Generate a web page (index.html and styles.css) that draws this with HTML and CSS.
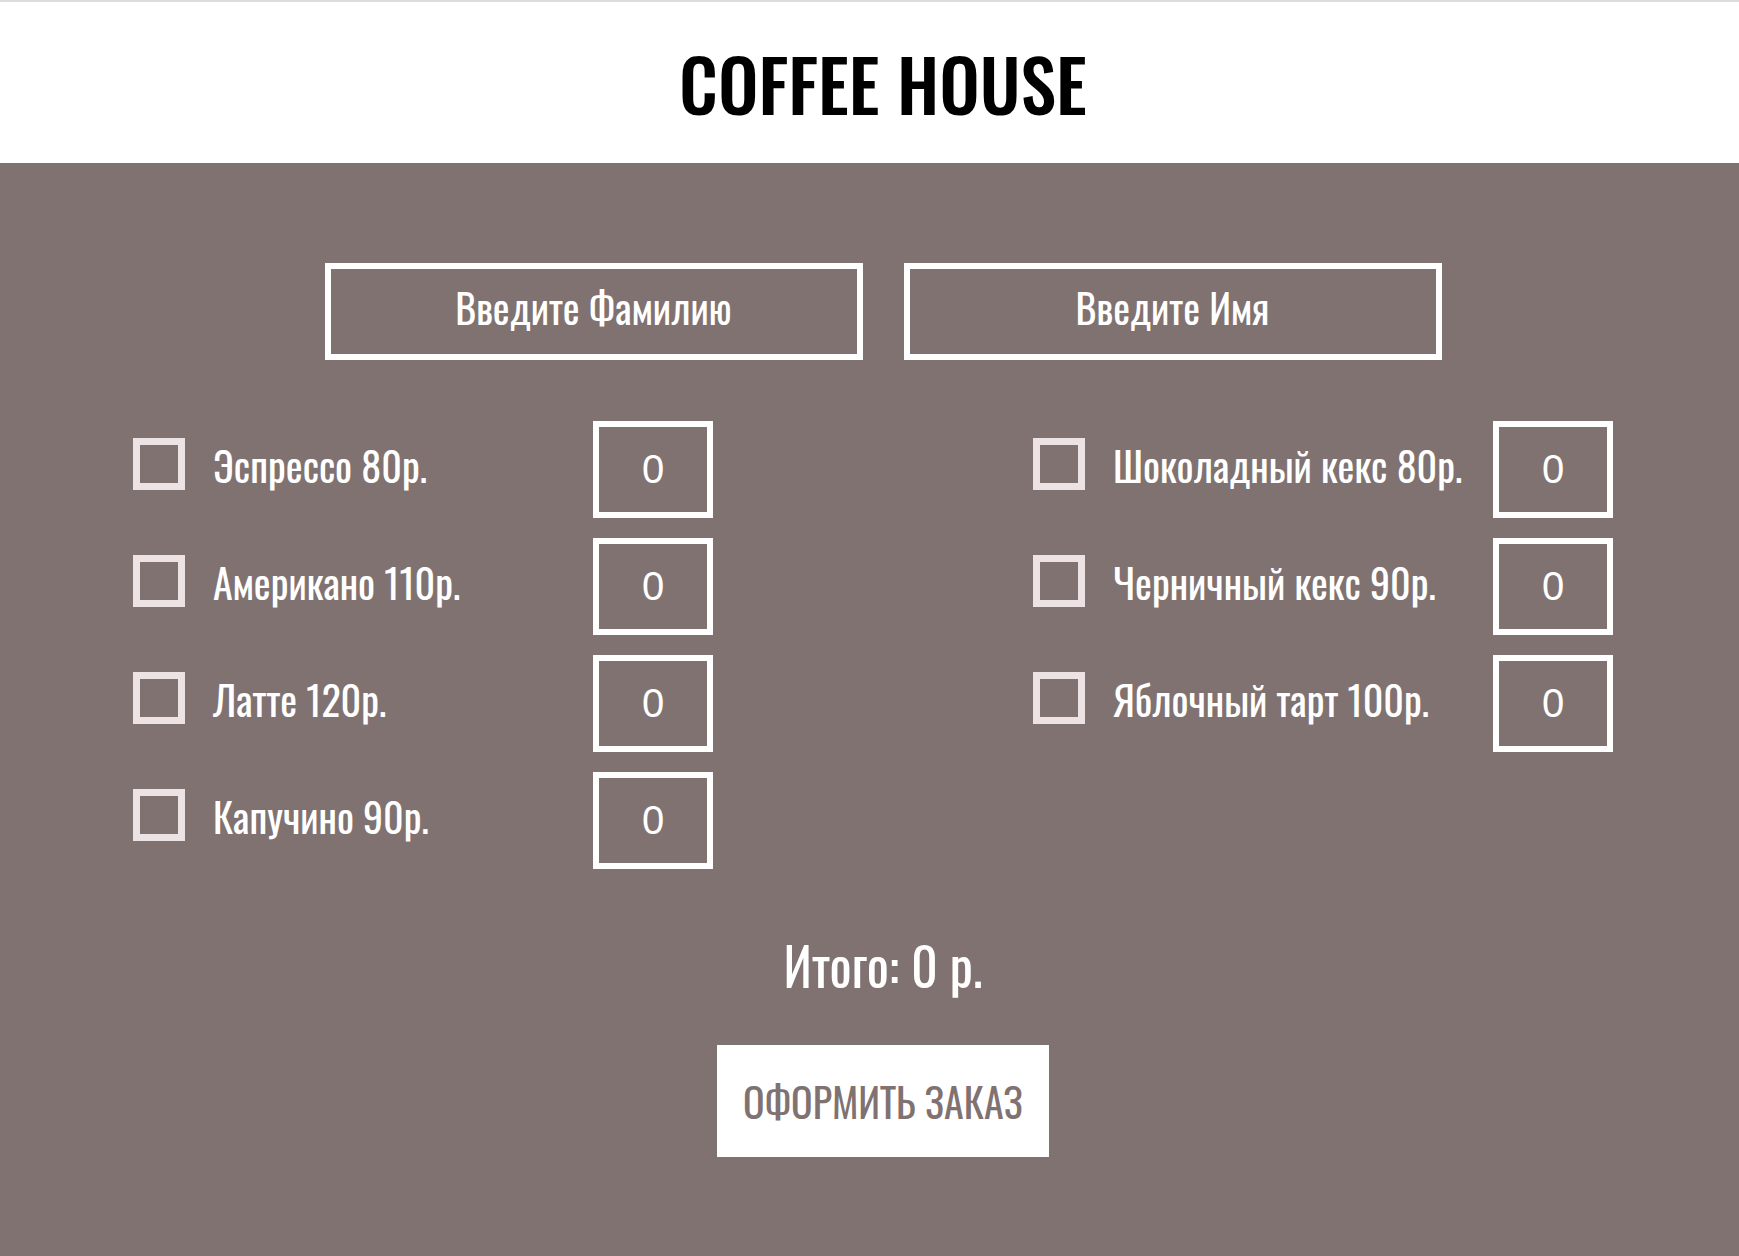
FILE: index.html
```html
<!DOCTYPE html>
<html lang="ru">
<head>
    <meta charset="UTF-8">
    <meta name="viewport" content="width=device-width, initial-scale=1.0">
    <title>Coffee House</title>
<link rel="stylesheet" href="styles.css">
</head>
<body>
    <header class="top">
        <h1 class="brand">COFFEE HOUSE</h1>
    </header>

    <main class="order">
        <div class="names">
            <input class="name-field" type="text" placeholder="Введите Фамилию">
            <input class="name-field" type="text" placeholder="Введите Имя">
        </div>

        <div class="menu">
            <div class="menu-col">
                <label class="item">
                    <input class="check" type="checkbox" data-price="80">
                    <span class="item-name">Эспрессо 80р.</span>
                    <input class="qty" type="text" value="0">
                </label>
                <label class="item">
                    <input class="check" type="checkbox" data-price="110">
                    <span class="item-name">Американо 110р.</span>
                    <input class="qty" type="text" value="0">
                </label>
                <label class="item">
                    <input class="check" type="checkbox" data-price="120">
                    <span class="item-name">Латте 120р.</span>
                    <input class="qty" type="text" value="0">
                </label>
                <label class="item">
                    <input class="check" type="checkbox" data-price="90">
                    <span class="item-name">Капучино 90р.</span>
                    <input class="qty" type="text" value="0">
                </label>
            </div>
            <div class="menu-col">
                <label class="item">
                    <input class="check" type="checkbox" data-price="80">
                    <span class="item-name">Шоколадный кекс 80р.</span>
                    <input class="qty" type="text" value="0">
                </label>
                <label class="item">
                    <input class="check" type="checkbox" data-price="90">
                    <span class="item-name">Черничный кекс 90р.</span>
                    <input class="qty" type="text" value="0">
                </label>
                <label class="item">
                    <input class="check" type="checkbox" data-price="100">
                    <span class="item-name">Яблочный тарт 100р.</span>
                    <input class="qty" type="text" value="0">
                </label>
            </div>
        </div>

        <p class="total">Итого: <span id="sum">0</span> р.</p>
        <div class="actions">
            <button class="submit" type="button">ОФОРМИТЬ ЗАКАЗ</button>
        </div>
    </main>

<script>
    let items = document.querySelectorAll(".item"),
    sum = document.getElementById("sum");

    function count() {
        let total = 0;
        items.forEach(item => {
            let check = item.querySelector(".check"),
            qty = parseInt(item.querySelector(".qty").value) || 0;
            if (check.checked) total += qty * check.dataset.price;
        });
        sum.textContent = total;
    }
    items.forEach(item => item.addEventListener("input", count));
</script>
</body>
</html>
```

FILE: styles.css
```css
body{
    margin: 0;
    font-family: "Oswald", "Roboto Condensed", sans-serif;
    background-color: #807271;
}
.top{
    height: 161px;
    border-top: 2px solid #dcdcdc;
    background-color: white;
    display: flex;
    align-items: center;
    justify-content: center;
    padding-left: 27px;
}
.brand{
    margin: 0;
    font-size: 72px;
    font-weight: 500;
    color: black;
}
.order{
    padding: 100px 0 99px;
    color: white;
}
.names{
    display: flex;
    justify-content: center;
    gap: 41px;
    padding-left: 27px;
}
.name-field{
    box-sizing: border-box;
    width: 538px;
    height: 97px;
    padding: 0 0 10px;
    border: 6px solid white;
    background: transparent;
    text-align: center;
    font-family: inherit;
    font-size: 40px;
    color: white;
    outline: none;
    &::placeholder{
        color: white;
    }
}
.menu{
    display: grid;
    grid-template-columns: 580px 580px;
    column-gap: 320px;
    margin: 61px 0 0 133px;
}
.menu-col{
    display: flex;
    flex-direction: column;
    gap: 20px;
}
.item{
    display: flex;
    align-items: center;
    height: 97px;
    font-size: 40px;
    white-space: nowrap;
}
.check{
    appearance: none;
    box-sizing: border-box;
    width: 52px;
    height: 52px;
    margin: 0 28px 0 0;
    border: 7px solid #ede3e4;
    background: transparent;
    cursor: pointer;
    position: relative;
    top: -6px;
}
.check:checked{
    background-color: #ede3e4;
}
.item-name{
    flex: 1;
    padding-bottom: 9px;
}
.qty{
    box-sizing: border-box;
    width: 120px;
    height: 97px;
    border: 6px solid white;
    background: transparent;
    text-align: center;
    font-family: "Liberation Sans", sans-serif;
    font-size: 40px;
    color: white;
    outline: none;
}
.total{
    margin: 66px 0 0;
    padding-left: 27px;
    text-align: center;
    font-size: 52px;
    line-height: 60px;
}
.actions{
    display: flex;
    justify-content: center;
    padding-left: 27px;
    margin-top: 50px;
}
.submit{
    width: 332px;
    height: 112px;
    border: none;
    background-color: white;
    color: #807271;
    font-family: inherit;
    font-size: 40px;
    cursor: pointer;
}
```
